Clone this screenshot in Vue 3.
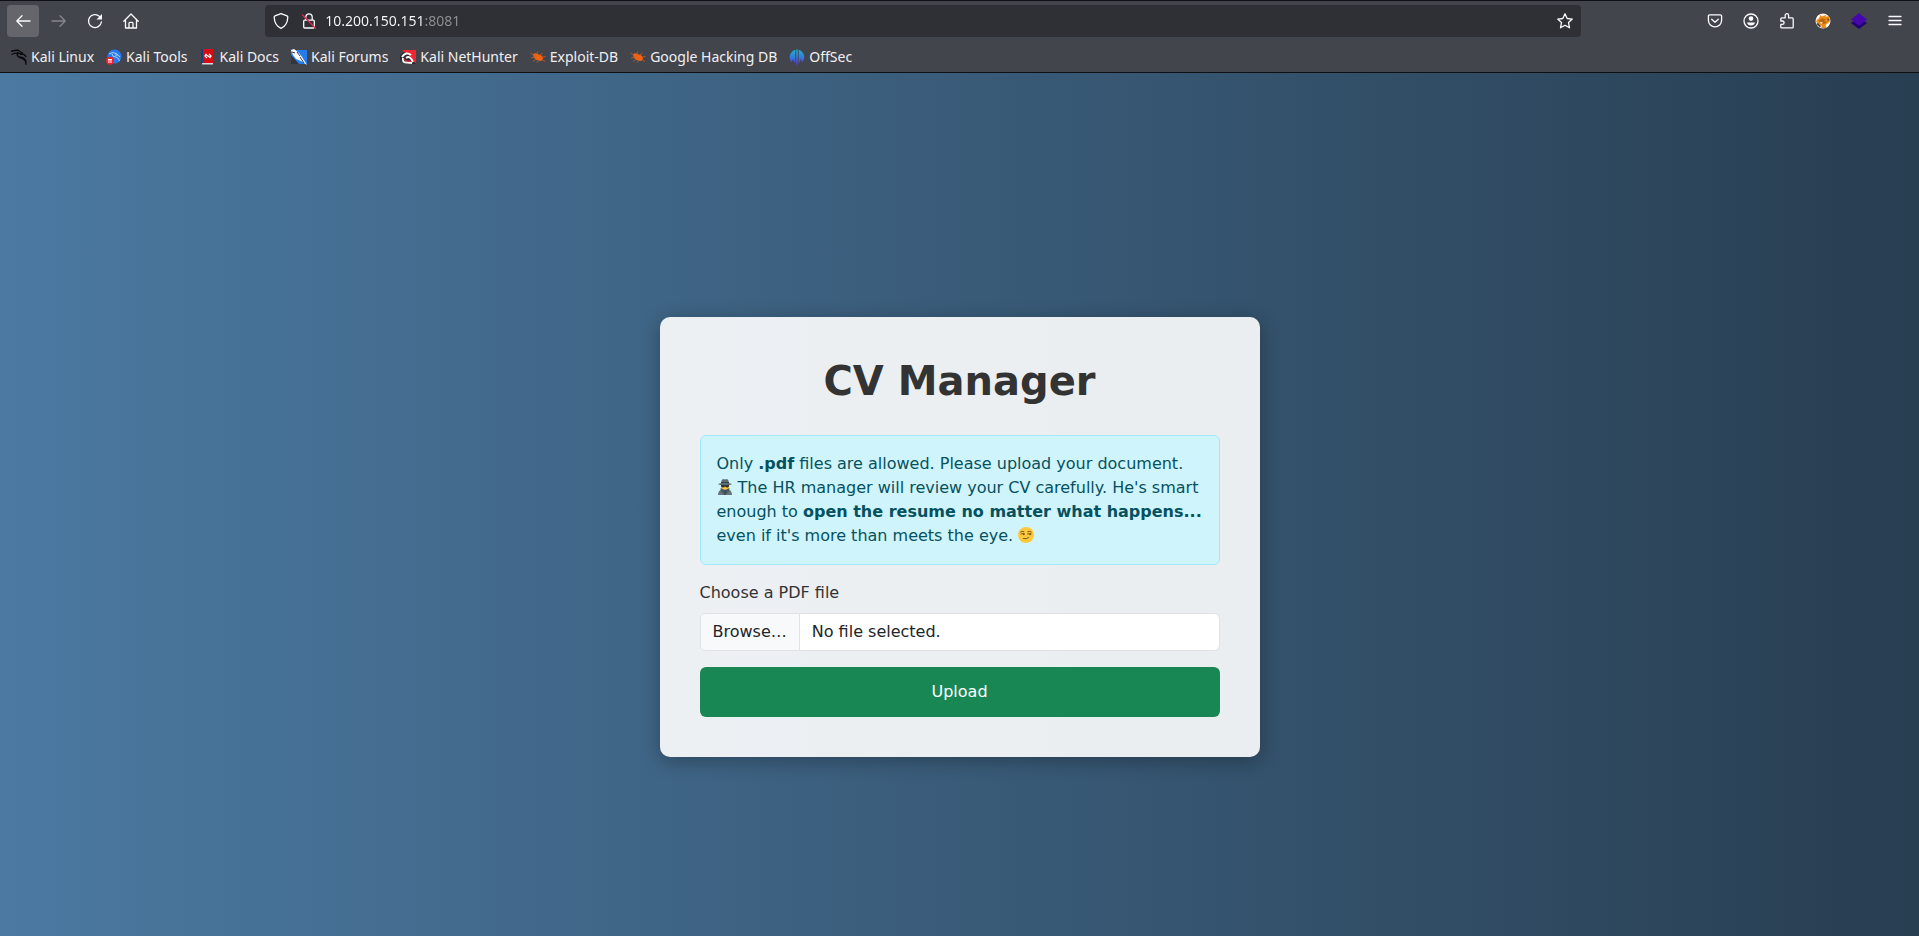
<script setup>
import { ref } from 'vue'

const address = ref('10.200.150.151:8081')

const bookmarks = [
  { label: 'Kali Linux', icon: 'dragon' },
  { label: 'Kali Tools', icon: 'tools' },
  { label: 'Kali Docs', icon: 'docs' },
  { label: 'Kali Forums', icon: 'forums' },
  { label: 'Kali NetHunter', icon: 'nethunter' },
  { label: 'Exploit-DB', icon: 'bug' },
  { label: 'Google Hacking DB', icon: 'bug' },
  { label: 'OffSec', icon: 'offsec' },
]

const fileName = ref('No file selected.')

function onPick(event) {
  const file = event.target.files[0]
  fileName.value = file ? file.name : 'No file selected.'
}
</script>

<template>
  <div class="window">
    <header class="chrome">
      <div class="navbar">
        <button class="tool active" type="button" aria-label="Back">
          <svg class="line" viewBox="0 0 16 16"><path d="M15 8H1.8M7 2.8L1.8 8L7 13.2" /></svg>
        </button>
        <button class="tool faded" type="button" aria-label="Forward">
          <svg class="line" viewBox="0 0 16 16"><path d="M1 8h13.2M9 2.8L14.2 8L9 13.2" /></svg>
        </button>
        <button class="tool" type="button" aria-label="Reload">
          <svg class="line" viewBox="0 0 16 16"><path d="M14.4 9A6.5 6.5 0 1 1 12.500 3.400" /><path class="solid" d="M15 1v5.500H9.500z" /></svg>
        </button>
        <button class="tool" type="button" aria-label="Home">
          <svg class="line" viewBox="0 0 16 16"><path d="M.8 8.200L8 1l7.200 7.200M2.500 7v8h11V7M6 14.800V10.200q0-.9.900-.9h2.200q.9 0 .9.900v4.600" /></svg>
        </button>
        <span class="spring"></span>
        <div class="urlbar">
          <div class="site">
            <svg class="line icon" viewBox="0 0 16 16"><path d="M8 .6l6 2.300q.8.300.8 1.200C14.700 9.700 12.300 13.500 8 15.400 3.700 13.500 1.300 9.700 1.200 4.100q0-.9.800-1.200z" /></svg>
            <svg class="line icon" viewBox="0 0 16 16"><path d="M4.800 7V4a3.200 3.200 0 0 1 6.400 0V7M3.700 7.200h8.600q1 0 1 1v5.800q0 1-1 1H3.700q-1 0-1-1V8.200q0-1 1-1z" /><path class="slash" d="M1.500 2l13 13.200" /></svg>
          </div>
          <input v-model="address" class="address" type="text" aria-label="Address" spellcheck="false" />
          <button class="star" type="button" aria-label="Bookmark this page">
            <svg class="line" viewBox="0 0 16 16"><path d="M8 .8l2.200 4.700 5.100.6-3.800 3.500 1 5.200L8 12.300l-4.500 2.500 1-5.200L.7 6.100l5.100-.6z" /></svg>
          </button>
        </div>
        <span class="spring"></span>
        <button class="tool" type="button" aria-label="Save to Pocket">
          <svg class="line" viewBox="0 0 16 16"><path d="M2.700 1.800h10.600q1.300 0 1.300 1.300v4.200a6.600 6.600 0 0 1-13.200 0V3.100q0-1.300 1.300-1.300zM4.700 6.200L8 9.300l3.300-3.100" /></svg>
        </button>
        <button class="tool" type="button" aria-label="Account">
          <svg class="line" viewBox="0 0 16 16"><circle cx="8" cy="8" r="7" /><circle class="solid" cx="8" cy="5.600" r="2.300" /><path class="solid" d="M4 9.500h8q-.7 3-4 3t-4-3z" /></svg>
        </button>
        <button class="tool" type="button" aria-label="Extensions">
          <svg class="line" viewBox="0 0 16 16"><path d="M1.800 8V5.900q0-1 1-1h3.400V2.400a1.700 1.700 0 0 1 3.400 0v2.500h3.600q1 0 1 1v8q0 1-1 1H2.800q-1 0-1-1v-2.500h1.600a1.700 1.700 0 0 0 0-3.400z" /></svg>
        </button>
        <button class="tool" type="button" aria-label="FoxyProxy">
          <svg viewBox="0 0 16 16"><circle cx="8" cy="8" r="7.500" fill="#f4efe8" /><path d="M1 8l3-3 1-3 2 1.500L11 2l-.5 2L14 3l1 5-2 3-2.500 1L11 15H6l1-2-4-2z" fill="#ee8a12" /><path d="M4 7l3-1.500 4 .5-2 2 3 1-3 2-4-1z" fill="#b9660c" /><path d="M1 11l2-1 3 3-1 1.500zM12.500 5l2 1.500-2 2z" fill="#5c4a38" /><path d="M5 9l3 .5-2 1.500zM2 4l2-2 1 1-2 3zM11 12l3-3-1 4z" fill="#fff" /></svg>
        </button>
        <button class="tool" type="button" aria-label="Wappalyzer">
          <svg viewBox="0 0 16 16"><path d="M0 10l8-5 8 5-8 6z" fill="#230070" /><path d="M0 6.500L8 0l8 6.500-8 6.500z" fill="#4608ad" /></svg>
        </button>
        <button class="tool" type="button" aria-label="Application menu">
          <svg class="line" viewBox="0 0 16 16"><path d="M2 3.500h12M2 7.500h12M2 11.500h12" /></svg>
        </button>
      </div>

      <nav class="bookmarks" aria-label="Bookmarks">
        <a v-for="item in bookmarks" :key="item.label" href="#" class="bookmark">
          <svg v-if="item.icon === 'dragon'" viewBox="0 0 16 16" fill="none" stroke="#08090b"><path d="M0 2.300L6.500 1l5.500 3.500M.5 5.500q4-2.500 9-.5M7 3q-2 4 1.500 5.300 4.500 0 6 3.200.5 2 .5 4.200M9 5.200q4-.7 6.300 2.600M13.300 6.200l2 1.600" stroke-width="1.400" /><path d="M9 8.400q4 1 5.700 3.600" stroke-width="1.600" /></svg>
          <svg v-else-if="item.icon === 'tools'" viewBox="0 0 16 16"><circle cx="8.500" cy="7.500" r="7" fill="#2878f0" /><path d="M3 5q5-3 9 1M6 5q0 3 4 3 3 1 3.500 4M9 6q3-1 5 2" fill="none" stroke="#b5d5ff" /><circle cx="4" cy="11.800" r="4" fill="#ea2330" /><path d="M2 10.500h4M3 10.500V14M5 10.500V14" stroke="#fff" fill="none" /></svg>
          <svg v-else-if="item.icon === 'docs'" viewBox="0 0 16 16"><path d="M1 0h3v15H1z" fill="#143f83" /><path d="M3 0h10v14H3z" fill="#d90c12" /><path d="M2 14h11v1.500H2z" fill="#d8d8de" /><path d="M6.500 5L5 7l2 2M9 5l2 2-1.500 2M6.500 6l3 2" fill="none" stroke="#fff" stroke-width="1.300" /></svg>
          <svg v-else-if="item.icon === 'forums'" viewBox="0 0 16 16"><path d="M0 1h16v14H0z" fill="#237df0" /><path d="M0 6l8 9H0z" fill="#34363d" /><path d="M0 1l3-1 5 4 3 4 5 8-6-4-5-2-3-4z" fill="#fff" /><path d="M1 3l3 1M6 3l3 4M9 8l4 6" stroke="#34363d" fill="none" /></svg>
          <svg v-else-if="item.icon === 'nethunter'" viewBox="0 0 16 16"><path d="M2 1h14v14z" fill="#ef2631" /><path d="M0 7l3-4 4 1 9 11H4L0 11z" fill="#292b31" /><path d="M2 8q4-6 9-2M3 9q-1 5 4 4.500l5 .5M6 9q4-3 7 4" fill="none" stroke="#fff" stroke-width="2" /><path d="M4 10q2 3 7 2" stroke="#e02633" stroke-width="1.300" fill="none" /></svg>
          <svg v-else-if="item.icon === 'bug'" viewBox="0 0 16 16"><path d="M3 5.500q2-2 4.500-.5 5 1 5.500 4 0 3-3 3-4.500-.5-6.500-4z" fill="#ef6212" /><path d="M.5 4l3 2M1 9l4-1M7 5l.5-2.500M10 6l2.500-2M12.500 8l3-.5M12.500 11l2.500 1.500M6 10l-3 2.500M8 12l-1 1.500" stroke="#b0592b" fill="none" /></svg>
          <svg v-else viewBox="0 0 16 16"><defs><linearGradient id="offsec" x2="0" y2="16" gradientUnits="userSpaceOnUse"><stop stop-color="#20b3c8" /><stop offset=".5" stop-color="#2f7fdf" /><stop offset="1" stop-color="#672bc9" /></linearGradient></defs><path d="M6.300.8V15Q4.800 13 4.300 10 3.500 12 2.600 13A7.500 7.500 0 0 1 6.300.8zM9.700.8V15q1.500-2 2-5 .8 2 1.700 3A7.500 7.500 0 0 0 9.700.8zM7.200.5h1.600V16H7.200z" fill="url(#offsec)" /></svg>
          <span>{{ item.label }}</span>
        </a>
      </nav>
    </header>

    <main class="page">
      <section class="card">
        <h1>CV Manager</h1>
        <div class="notice">
          Only <strong>.pdf</strong> files are allowed. Please upload your document.<br />
          <svg class="emoji" viewBox="0 0 16 16" role="img" aria-label="Detective"><path d="M1 16q0-4.500 3.500-5.500h7Q15 11.500 15 16z" fill="#66757f" /><path d="M4 5h8v4q-1 3-4 3T4 9z" fill="#ffc83d" /><path d="M3.500 9l4.500 2 4.500-2-.5 3.500L8 16l-4-3.500z" fill="#4b5960" /><path d="M8 11v5" stroke="#36434a" fill="none" /><path d="M4 6h8v1.200q-.5 1.300-2 1.300T8 7.200Q7.500 8.500 6 8.500T4 7.200z" fill="#292f33" /><path d="M4 4q.3-3.500 2-4l2 .6 2-.6q1.700.5 2 4z" fill="#5d6b74" /><path d="M4 3h8v1.300H4z" fill="#343e44" /><path d="M1 5q3-1.200 7-1.200T15 5q-1 1.200-7 1.200T1 5z" fill="#5d6b74" /></svg>
          The HR manager will review your CV carefully. He's smart enough to
          <strong>open the resume no matter what happens...</strong>
          even if it's more than meets the eye.
          <svg class="emoji" viewBox="0 0 16 16" role="img" aria-label="Smirking face"><circle cx="8" cy="8" r="8" fill="#ffc83d" /><path d="M2.500 5q1.500-1.200 3.300-.4M9.800 4.600q2-.8 3.500.4M3 6.900q1.500-.8 3.600 0M9.600 6.900q1.800-.8 3.600 0M5.500 11.600q3 .8 5.300-1" fill="none" stroke="#6b4712" stroke-width=".9" stroke-linecap="round" /><circle cx="5.600" cy="7.500" r=".8" fill="#6b4712" /><circle cx="12" cy="7.500" r=".8" fill="#6b4712" /></svg>
        </div>
        <form @submit.prevent>
          <label class="field-label" for="cv">Choose a PDF file</label>
          <div class="picker">
            <span class="browse" aria-hidden="true">Browse…</span>
            <span class="chosen">{{ fileName }}</span>
            <input id="cv" type="file" accept=".pdf" @change="onPick" />
          </div>
          <button class="upload" type="submit">Upload</button>
        </form>
      </section>
    </main>
  </div>
</template>

<style>
body {
  background: #283e51;
}
</style>

<style scoped>
.window {
  display: flex;
  flex-direction: column;
  min-height: 100vh;
  font-family: "DejaVu Sans", sans-serif;
}

.window * {
  box-sizing: border-box;
}

.chrome {
  background: #43454c;
  border-top: 1px solid #0f1013;
  border-bottom: 1px solid #0f1013;
  color: #fbfbfe;
  font: 14px/20px "Noto Sans", sans-serif;
}

.navbar {
  display: flex;
  align-items: center;
  height: 40px;
  padding: 0 8px 0 7px;
}

.tool,
.star {
  display: grid;
  place-items: center;
  padding: 0;
  border: 0;
  background: none;
  color: inherit;
}

.tool {
  flex: none;
  width: 32px;
  height: 32px;
  border-radius: 4px;
}

.tool + .tool {
  margin-left: 4px;
}

.active {
  background: #65666b;
}

.faded {
  color: #86878c;
}

.tool svg,
.star svg,
.icon,
.bookmark svg {
  display: block;
  flex: none;
  width: 16px;
  height: 16px;
}

.line {
  fill: none;
  stroke: currentColor;
  stroke-width: 1.3;
  stroke-linecap: round;
  stroke-linejoin: round;
}

.solid {
  fill: currentColor;
  stroke: none;
}

.slash {
  stroke: #e22850;
}

.spring {
  flex: 1 1 0;
}

.urlbar {
  display: flex;
  flex: 11 1 0;
  align-items: center;
  gap: 8px;
  height: 32px;
  padding: 0 8px;
  border-radius: 4px;
  background: #2f3035;
}

.site {
  display: flex;
  gap: 12px;
}

/* The host is bright and the port after it is dimmed. */
.address {
  flex: 1;
  min-width: 0;
  padding: 0;
  border: 0;
  outline: 0;
  background: linear-gradient(to right, #fbfbfe 100px, #8d8e92 100px);
  background-clip: text;
  color: transparent;
  caret-color: #fbfbfe;
  font: inherit;
}

.bookmarks {
  display: flex;
  align-items: center;
  gap: 12px;
  height: 31px;
  padding-left: 11px;
}

.bookmark {
  display: flex;
  align-items: center;
  gap: 4px;
  color: #f0f0f3;
  text-decoration: none;
  white-space: nowrap;
}

.page {
  display: flex;
  flex: 1;
  align-items: center;
  justify-content: center;
  background: linear-gradient(to right, #4b79a1, #283e51);
}

.card {
  width: 600px;
  max-width: 100%;
  margin-top: 65px;
  padding: 40px;
  border-radius: 10px;
  background: rgba(255, 255, 255, 0.9);
  box-shadow: 0 4px 20px rgba(0, 0, 0, 0.3);
  color: #333;
  font-size: 16px;
  line-height: 24px;
}

h1 {
  margin: 0 0 30px;
  font-size: 40px;
  font-weight: 700;
  line-height: 48px;
  text-align: center;
}

.notice {
  margin-bottom: 16px;
  padding: 16px;
  border: 1px solid #9eeaf9;
  border-radius: 6px;
  background: #cff4fc;
  color: #055160;
}

.emoji {
  width: 16px;
  height: 16px;
  vertical-align: -2px;
}

.field-label {
  display: block;
  margin-bottom: 8px;
}

.picker {
  position: relative;
  display: flex;
  height: 38px;
  margin-bottom: 16px;
  overflow: hidden;
  border: 1px solid #dee2e6;
  border-radius: 6px;
  background: #fff;
  color: #212529;
}

.browse,
.chosen {
  padding: 6px 12px;
}

.browse {
  border-right: 1px solid #dee2e6;
  background: #f8f9fa;
}

.picker input {
  position: absolute;
  inset: 0;
  width: 100%;
  opacity: 0;
}

.upload {
  display: block;
  width: 100%;
  padding: 13px;
  border: 0;
  border-radius: 6px;
  background: #198754;
  color: #fff;
  font: inherit;
}
</style>
